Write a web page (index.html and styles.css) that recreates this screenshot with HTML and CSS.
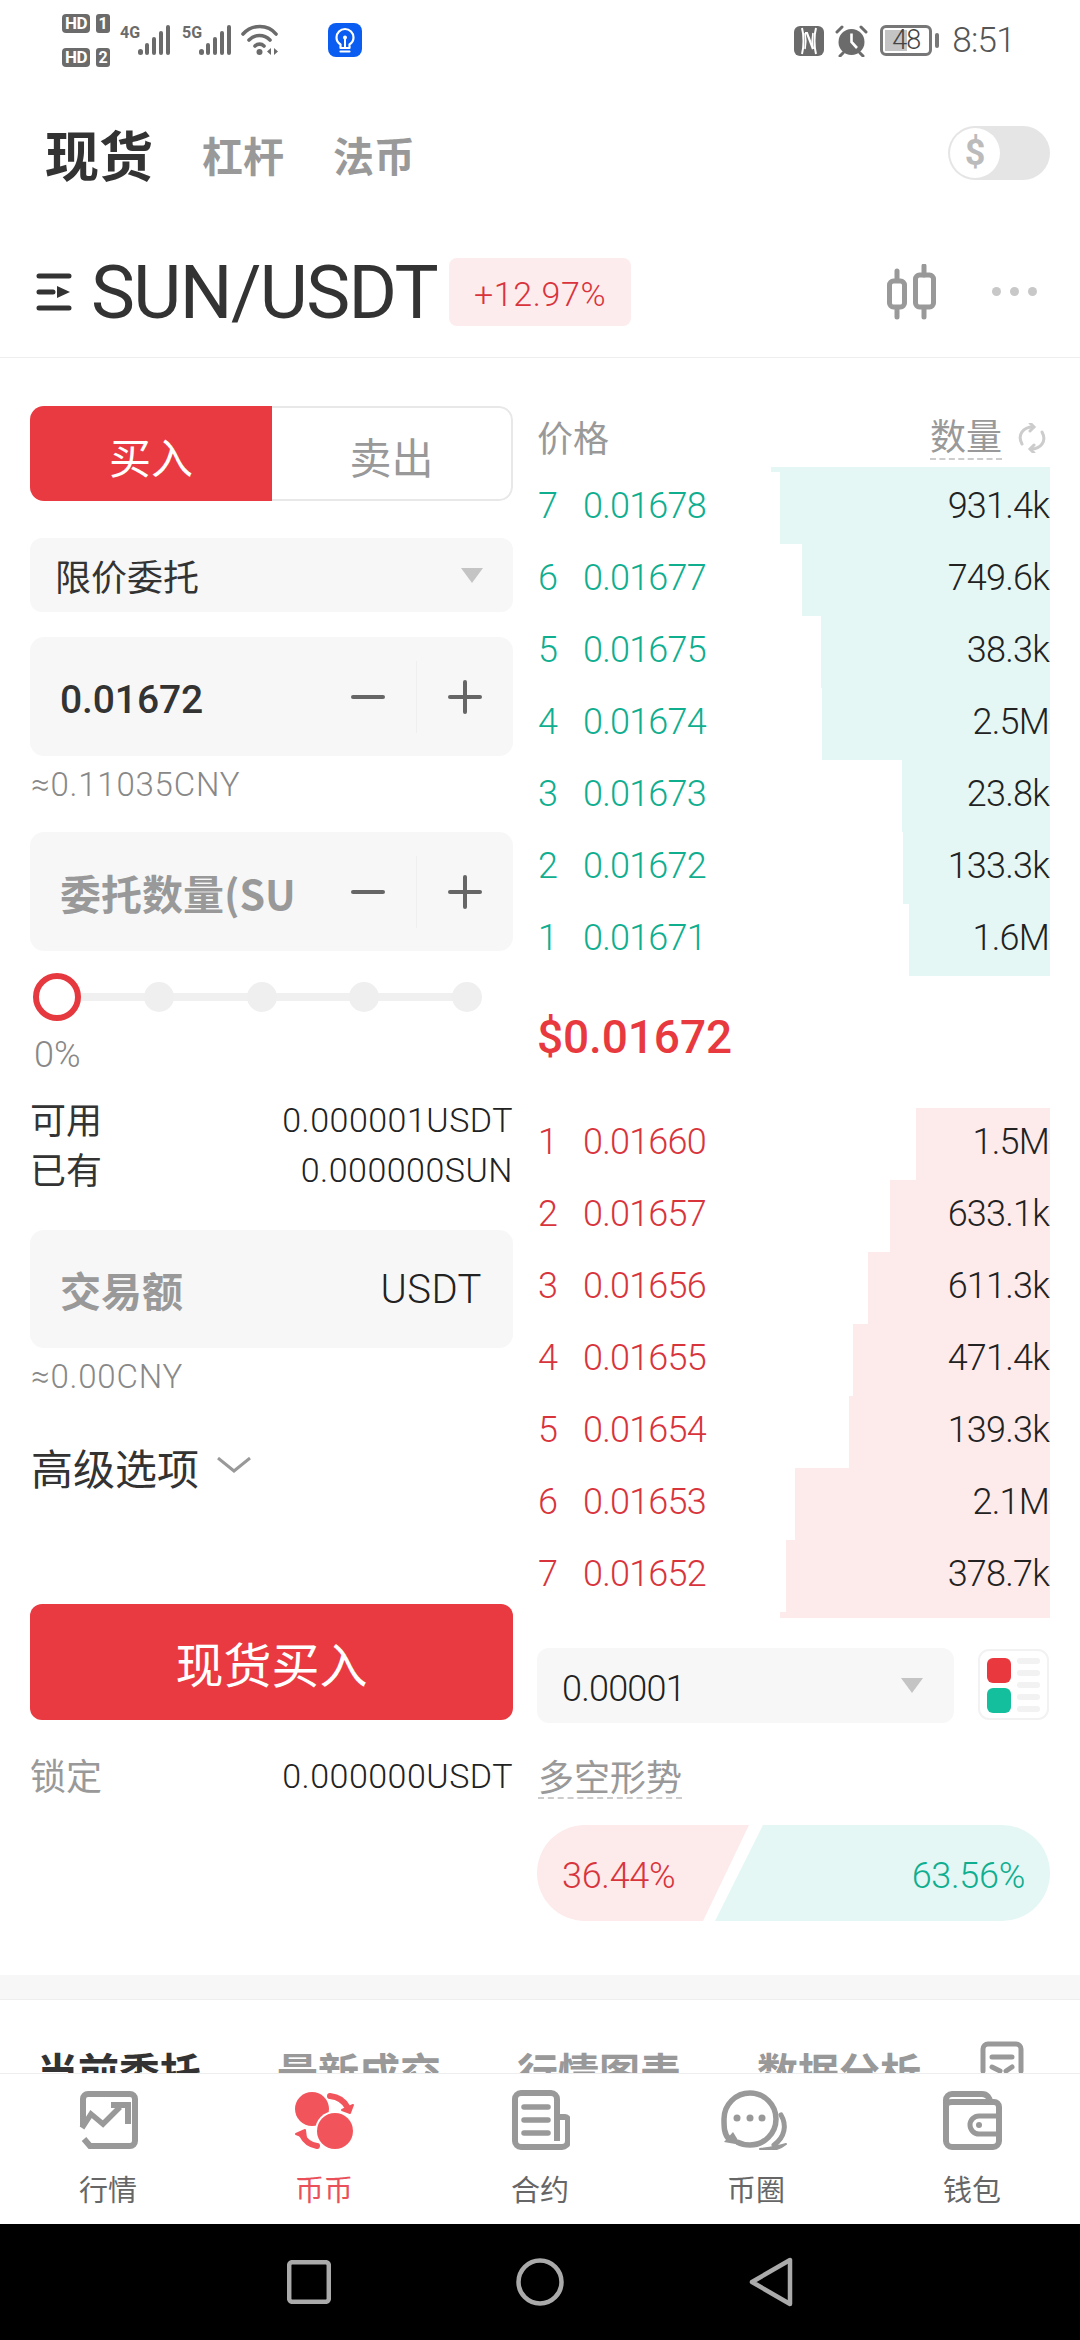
FILE: index.html
```html
<!DOCTYPE html>
<html lang="zh">
<head>
<meta charset="utf-8">
<title>现货</title>
<link rel="stylesheet" href="styles.css">
</head>
<body>
<div class="app">
  <div class="status">
    <div class="hd-stack">
      <div class="hd-line"><span class="hd">HD</span><span class="hd-n">1</span></div>
      <div class="hd-line"><span class="hd">HD</span><span class="hd-n">2</span></div>
    </div>
    <svg class="sig sig-a" width="52" height="32" viewBox="0 0 52 32"><text x="0" y="14" class="sig-t">4G</text><g fill="#6b6b6b"><rect x="18" y="25" width="5" height="6" rx="2.5"/><rect x="25" y="19" width="4" height="12" rx="2"/><rect x="32" y="13" width="4" height="18" rx="2"/><rect x="39" y="7" width="4" height="24" rx="2"/><rect x="46" y="1" width="4" height="30" rx="2"/></g></svg>
    <svg class="sig sig-b" width="50" height="32" viewBox="0 0 50 32"><text x="0" y="14" class="sig-t">5G</text><g fill="#6b6b6b"><rect x="17" y="25" width="5" height="6" rx="2.5"/><rect x="24" y="19" width="4" height="12" rx="2"/><rect x="31" y="13" width="4" height="18" rx="2"/><rect x="38" y="7" width="4" height="24" rx="2"/><rect x="45" y="1" width="4" height="30" rx="2"/></g></svg>
    <svg class="wifi" width="40" height="32" viewBox="0 0 40 32" fill="none" stroke="#6b6b6b" stroke-width="3.6" stroke-linecap="round"><path d="M2 10C11 0 27 0 35 10"/><path d="M8 16C14 10 23 10 29 16"/><path d="M14 22C16.500 19.500 20.500 19.500 23 22"/><circle cx="18.500" cy="28" r="3" fill="#6b6b6b" stroke="none"/><path d="M30 24l-4 3.500 4 3.500zM33 24l4 3.500-4 3.500z" fill="#6b6b6b" stroke="none"/></svg>
    <svg class="bulb" width="34" height="34" viewBox="0 0 34 34"><rect width="34" height="34" rx="8" fill="#0b5df2"/><path d="M12.500 21.500C9.500 19.500 8.500 17 8.500 14.500a8.500 8.500 0 0 1 17 0c0 2.500-1 5-4 7v3.500h-9zM12.500 28.500h9" fill="none" stroke="#fff" stroke-width="2.200" stroke-linecap="round" stroke-linejoin="round"/><path d="M17 25v-9" stroke="#fff" stroke-width="2"/><circle cx="17" cy="14.500" r="2" fill="#fff"/></svg>
    <div class="status-right">
      <svg width="30" height="30" viewBox="0 0 30 30"><rect width="30" height="30" rx="6" fill="#6b6b6b"/><g fill="none" stroke="#fff"><path d="M8 2c2 7 2 19 0 26" stroke-width="2"/><path d="M22 2c-2 7-2 19 0 26" stroke-width="2"/><path d="M11 7h2l6 16" stroke-width="2.200"/><path d="M11 7c1 5 1 11 0 16M19 7c-1 5-1 11 0 16" stroke-width="1.600"/></g></svg>
      <svg class="alarm" width="33" height="32" viewBox="0 0 33 32"><circle cx="16.500" cy="17" r="13" fill="#6b6b6b"/><path d="M16.500 8.500V17l5.500 6" stroke="#fff" stroke-width="2.600" fill="none"/><path d="M2 7l5-5M31 7l-5-5M5 31l3-3M28 31l-3-3" stroke="#6b6b6b" stroke-width="3" stroke-linecap="round"/></svg>
      <div class="battery"><span class="battery-fill"></span><span class="battery-num">48</span></div>
      <span class="battery-nub"></span>
      <span class="clock">8:51</span>
    </div>
  </div>

  <div class="scroll">
    <div class="tabs">
      <span class="tab-on">现货</span>
      <span class="tab">杠杆</span>
      <span class="tab">法币</span>
      <div class="toggle"><span class="knob">$</span></div>
    </div>

    <div class="pair">
      <svg class="menu" width="36" height="38" viewBox="0 0 36 38"><g stroke="#333" stroke-width="5" stroke-linecap="round"><path d="M3 3h30M3 19h14M3 35h30"/></g><path d="M21 13l13 6-13 6z" fill="#333"/></svg>
      <span class="pair-name">SUN/USDT</span>
      <span class="chg">+12.97%</span>
      <svg class="candle" width="50" height="56" viewBox="0 0 50 56" fill="none" stroke="#999" stroke-width="5" stroke-linecap="round"><path d="M10 7v9M10 44v9M37 2v9M37 44v9"/><rect x="2.500" y="17" width="15" height="26" rx="4"/><rect x="28.500" y="11" width="18" height="32" rx="4"/></svg>
      <div class="dots"><i></i><i></i><i></i></div>
    </div>

    <div class="main">
      <div class="trade">
        <div class="seg"><span class="seg-on">买入</span><span class="seg-off">卖出</span></div>
        <div class="select type"><span>限价委托</span><i class="tri"></i></div>
        <div class="field f-price">
          <span class="value">0.01672</span>
          <span class="stepper"><i class="minus"></i><i class="sep"></i><i class="plus"></i></span>
        </div>
        <div class="hint">≈0.11035CNY</div>
        <div class="field f-qty">
          <span class="placeholder">委托数量(SU</span>
          <span class="stepper"><i class="minus"></i><i class="sep"></i><i class="plus"></i></span>
        </div>
        <div class="slider"><i class="ring"></i><i class="stop"></i><i class="stop"></i><i class="stop"></i><i class="stop"></i></div>
        <div class="pct">0%</div>
        <div class="kv kv-first"><span class="k">可用</span><span class="v">0.000001USDT</span></div>
        <div class="kv"><span class="k">已有</span><span class="v">0.000000SUN</span></div>
        <div class="field f-total"><span class="placeholder">交易额</span><span class="unit">USDT</span></div>
        <div class="hint">≈0.00CNY</div>
        <div class="adv"><span>高级选项</span><svg width="34" height="16" viewBox="0 0 34 16" fill="none" stroke="#999" stroke-width="3"><path d="M1 1l16 13L33 1"/></svg></div>
        <div class="buy">现货买入</div>
        <div class="kv lock"><span class="k muted">锁定</span><span class="v">0.000000USDT</span></div>
      </div>

      <div class="book">
        <div class="book-head">
          <span>价格</span>
          <span class="dash qty-h">数量</span>
          <svg class="refresh" width="30" height="30" viewBox="0 0 30 30" fill="none" stroke="#ccc" stroke-width="3" stroke-linecap="round"><path d="M5 21C0 12 6 4 16 4"/><path d="M25 9c5 9-1 17-11 17"/><path d="M13 0l4 4-4 4M17 22l-4 4 4 4"/></svg>
        </div>
        <div class="rows bids">
          <div class="row"><i class="bar" style="width:270px"></i><span class="idx">7</span><span class="px">0.01678</span><span class="qty">931.4k</span></div>
          <div class="row"><i class="bar" style="width:248px"></i><span class="idx">6</span><span class="px">0.01677</span><span class="qty">749.6k</span></div>
          <div class="row"><i class="bar" style="width:229px"></i><span class="idx">5</span><span class="px">0.01675</span><span class="qty">38.3k</span></div>
          <div class="row"><i class="bar" style="width:228px"></i><span class="idx">4</span><span class="px">0.01674</span><span class="qty">2.5M</span></div>
          <div class="row"><i class="bar" style="width:148px"></i><span class="idx">3</span><span class="px">0.01673</span><span class="qty">23.8k</span></div>
          <div class="row"><i class="bar" style="width:147px"></i><span class="idx">2</span><span class="px">0.01672</span><span class="qty">133.3k</span></div>
          <div class="row"><i class="bar" style="width:141px"></i><span class="idx">1</span><span class="px">0.01671</span><span class="qty">1.6M</span></div>
        </div>
        <div class="last">$0.01672</div>
        <div class="rows asks">
          <div class="row"><i class="bar" style="width:134px"></i><span class="idx">1</span><span class="px">0.01660</span><span class="qty">1.5M</span></div>
          <div class="row"><i class="bar" style="width:160px"></i><span class="idx">2</span><span class="px">0.01657</span><span class="qty">633.1k</span></div>
          <div class="row"><i class="bar" style="width:182px"></i><span class="idx">3</span><span class="px">0.01656</span><span class="qty">611.3k</span></div>
          <div class="row"><i class="bar" style="width:197px"></i><span class="idx">4</span><span class="px">0.01655</span><span class="qty">471.4k</span></div>
          <div class="row"><i class="bar" style="width:201px"></i><span class="idx">5</span><span class="px">0.01654</span><span class="qty">139.3k</span></div>
          <div class="row"><i class="bar" style="width:255px"></i><span class="idx">6</span><span class="px">0.01653</span><span class="qty">2.1M</span></div>
          <div class="row"><i class="bar" style="width:264px"></i><span class="idx">7</span><span class="px">0.01652</span><span class="qty">378.7k</span></div>
        </div>
        <div class="depth">
          <div class="select step"><span class="step-v">0.00001</span><i class="tri"></i></div>
          <svg class="layout" width="71" height="71" viewBox="0 0 71 71"><rect x="1" y="1" width="69" height="69" rx="10" fill="#fff" stroke="#f2f2f2" stroke-width="2"/><rect x="9" y="9" width="24" height="25" rx="6" fill="#e9393f"/><rect x="9" y="39" width="24" height="25" rx="6" fill="#14bf9e"/><g fill="#f2f2f2"><rect x="39" y="9" width="23" height="6" rx="3"/><rect x="39" y="21" width="23" height="6" rx="3"/><rect x="39" y="33" width="23" height="6" rx="3"/><rect x="39" y="45" width="23" height="6" rx="3"/><rect x="39" y="57" width="23" height="6" rx="3"/></g></svg>
        </div>
        <div class="ls-title"><span class="dash">多空形势</span></div>
        <div class="ls">
          <div class="ls-red"><span>36.44%</span></div>
          <div class="ls-green"><span>63.56%</span></div>
        </div>
      </div>
    </div>

    <div class="band"></div>

    <div class="lower-tabs">
      <span class="lt-on">当前委托</span>
      <span class="lt">最新成交</span>
      <span class="lt">行情图表</span>
      <span class="lt">数据分析</span>
      <svg class="lt-icon" width="44" height="60" viewBox="0 0 44 60" fill="none" stroke="#999" stroke-width="5" stroke-linecap="round"><path d="M3 30V8a5 5 0 0 1 5-5h28a5 5 0 0 1 5 5v22"/><path d="M12 16h20M12 26l8 4M32 26l-6 4"/></svg>
    </div>
  </div>

  <nav class="nav">
    <div class="nav-item">
      <svg width="60" height="60" viewBox="0 0 60 60" fill="none" stroke="#999" stroke-width="6"><path d="M5 37V9a5 5 0 0 1 5-5h42a5 5 0 0 1 5 5v42a5 5 0 0 1-5 5H12l-6-7"/><path d="M4 38l9-14 12 10 17-17" stroke-width="5.500"/><path d="M33 15h17v19" stroke-width="6"/></svg>
      <span>行情</span>
    </div>
    <div class="nav-item on">
      <svg width="60" height="60" viewBox="0 0 60 60" fill="#f2545b"><circle cx="18" cy="19" r="17"/><circle cx="41" cy="41" r="20" fill="#fff"/><circle cx="41" cy="41" r="18"/><path d="M36 6c9 1 15 6 18 12" fill="none" stroke="#f2545b" stroke-width="6" stroke-linecap="round"/><path d="M48 20l11-5-3 8z" stroke="#f2545b" stroke-width="2" stroke-linejoin="round"/><path d="M8 45c3 6 8 10 15 11" fill="none" stroke="#f2545b" stroke-width="6" stroke-linecap="round"/><path d="M2 44l9-4 1 8z" stroke="#f2545b" stroke-width="2" stroke-linejoin="round"/></svg>
      <span>币币</span>
    </div>
    <div class="nav-item">
      <svg width="60" height="60" viewBox="0 0 60 60" fill="none" stroke="#999" stroke-width="6"><path d="M47 57H11a6 6 0 0 1-6-6V9a6 6 0 0 1 6-6h30a6 6 0 0 1 6 6v42"/><path d="M47 27h8a3 3 0 0 1 3 3v21a6 6 0 0 1-6 6h-5"/><path d="M14 17h24M14 30h24M14 43h24" stroke-width="5.500" stroke-linecap="round"/></svg>
      <span>合约</span>
    </div>
    <div class="nav-item">
      <svg width="70" height="60" viewBox="0 0 70 60"><path d="M8 49C3 44 3 37 3 29a26 26 0 1 1 26 26c-5 0-9-1-13-3" fill="none" stroke="#999" stroke-width="5.500"/><path d="M12 42l-9 10 17 3z" fill="#999"/><circle cx="16" cy="28" r="3.500" fill="#999"/><circle cx="29" cy="28" r="3.500" fill="#999"/><circle cx="41" cy="28" r="3.500" fill="#999"/><path d="M60 25c6 10 4 22-7 30" fill="none" stroke="#999" stroke-width="5" stroke-linecap="round"/><path d="M39 59c8-1 17-2 26-5-6 5-17 8-24 7z" fill="#999" stroke="#999" stroke-width="2" stroke-linejoin="round"/></svg>
      <span>币圈</span>
    </div>
    <div class="nav-item">
      <svg width="60" height="60" viewBox="0 0 60 60" fill="none" stroke="#999" stroke-width="6"><path d="M4 20V10a6 6 0 0 1 6-6h30c5 0 8 4 8 8"/><path d="M4 16c0-3 3-4 6-4h42a5 5 0 0 1 5 5v34a6 6 0 0 1-6 6H10a6 6 0 0 1-6-6z"/><path d="M56 26H37a9 9 0 0 0 0 18h19" stroke-width="5"/><circle cx="37" cy="35" r="3" fill="#999" stroke="none"/></svg>
      <span>钱包</span>
    </div>
  </nav>

  <div class="sysbar">
    <svg width="44" height="44" viewBox="0 0 44 44" fill="none" stroke="#aaa" stroke-width="4.500" stroke-linejoin="round"><rect x="2.200" y="2.200" width="39.600" height="39.600" rx="3"/></svg>
    <svg width="48" height="48" viewBox="0 0 48 48" fill="none" stroke="#aaa" stroke-width="4.500"><circle cx="24" cy="24" r="21.500"/></svg>
    <svg width="44" height="50" viewBox="0 0 44 50" fill="none" stroke="#aaa" stroke-width="4.500" stroke-linejoin="round"><path d="M41 3v44L3 25z"/></svg>
  </div>
</div>
</body>
</html>
```

FILE: styles.css
```css
* { box-sizing: border-box; }
html, body { margin: 0; padding: 0; background: #fff; }
body { font-family: Roboto, "Noto Sans CJK SC", sans-serif; color: #333; }
i { display: block; font-style: normal; }

.app { width: 1080px; height: 2340px; display: flex; flex-direction: column; overflow: hidden; }

/* status bar */
.status { height: 80px; flex: none; display: flex; align-items: center; padding-left: 62px; position: relative; }
.hd-stack { display: flex; flex-direction: column; gap: 15px; margin-top: 1px; }
.hd-line { display: flex; gap: 6px; }
.hd { width: 28px; height: 19px; background: #6b6b6b; color: #fff; border-radius: 4px; font: 700 17px/19px Roboto, sans-serif; letter-spacing: -0.5px; text-align: center; }
.hd-n { width: 14px; height: 19px; background: #6b6b6b; color: #fff; border-radius: 3px; font: 700 16px/19px Roboto, sans-serif; text-align: center; }
.sig-t { font: 700 16px "Liberation Sans Narrow", Roboto, sans-serif; fill: #6b6b6b; }
.sig-a { margin-left: 10px; }
.sig-b { margin-left: 10px; }
.wifi { margin-left: 9px; }
.bulb { margin-left: 47px; }
.status-right { margin-left: auto; display: flex; align-items: center; padding-right: 65px; margin-top: 1px; }
.alarm { margin-left: 11px; }
.battery { position: relative; width: 52px; height: 31px; margin-left: 12px; border: 3px solid #777; border-radius: 6px; overflow: hidden; }
.battery-fill { display: block; width: 22px; height: 21px; margin: 2px; background: #c4c4c4; }
.battery-num { position: absolute; inset: 0; text-align: center; font: 300 27px/25px Roboto, sans-serif; letter-spacing: -1px; color: #444; }
.battery-nub { width: 4px; height: 15px; margin-left: 3px; background: #777; border-radius: 2px; }
.clock { margin-left: 13px; font-size: 35px; font-weight: 300; line-height: 40px; letter-spacing: -0.7px; color: #555; }

.scroll { flex: 1; min-height: 0; overflow: hidden; }

/* market tabs */
.tabs { height: 154px; display: flex; align-items: center; padding: 0 30px 6px 45px; }
.tab-on { font: 700 54px/60px "Noto Sans CJK SC", sans-serif; color: #333; }
.tab { margin-left: 49px; font: 700 41px/60px "Noto Sans CJK SC", sans-serif; color: #999; }
.toggle { margin-left: auto; width: 102px; height: 54px; margin-bottom: 2px; background: #e5e5e5; border-radius: 27px; padding: 2px; }
.knob { display: block; width: 50px; height: 50px; background: #fff; border-radius: 50%; text-align: center; font: 700 36px/50px Roboto, sans-serif; color: #bbb; }

/* pair header */
.pair { height: 124px; display: flex; align-items: center; padding: 0 43px 8px 36px; border-bottom: 1px solid #eee; }
.menu { flex: none; margin-right: 19px; }
.pair-name { padding-top: 3px; font-size: 74px; line-height: 84px; letter-spacing: -1.6px; color: #333; }
.chg { margin-left: 12px; width: 182px; height: 68px; background: #fdeced; border-radius: 8px; text-align: center; font-size: 34px; font-weight: 300; letter-spacing: 0.6px; line-height: 72px; color: #d9343c; }
.candle { margin-left: auto; }
.dots { margin-left: 55px; display: flex; gap: 9px; }
.dots i { width: 9px; height: 9px; border-radius: 50%; background: #c8c8c8; }

/* layout */
.main { display: flex; gap: 24px; padding: 48px 30px 54px; }
.trade { width: 483px; flex: none; }
.book { width: 513px; flex: none; }

/* trade form */
.seg { height: 95px; display: flex; border-radius: 14px; overflow: hidden; font: 400 42px/99px "Noto Sans CJK SC", sans-serif; text-align: center; }
.seg-on { width: 242px; background: #ea3a41; color: #fff; }
.seg-off { flex: 1; border: 2px solid #e8e8e8; border-left: 0; border-radius: 0 14px 14px 0; color: #999; line-height: 95px; }

.select { display: flex; align-items: center; justify-content: space-between; background: #f7f7f7; border-radius: 12px; }
.type { height: 74px; margin-top: 37px; padding: 0 30px 0 25px; font: 400 36px "Noto Sans CJK SC", sans-serif; color: #333; }
.tri { width: 0; height: 0; border-left: 11px solid transparent; border-right: 11px solid transparent; border-top: 15px solid #c4c4c4; }

.field { display: flex; align-items: center; justify-content: space-between; background: #f7f7f7; border-radius: 14px; padding: 0 31px 0 30px; }
.f-price { height: 119px; margin-top: 25px; }
.f-qty { height: 119px; margin-top: 27px; }
.f-total { height: 118px; margin-top: 35px; }
.value { padding-top: 7px; font-size: 39px; font-weight: 500; letter-spacing: -0.1px; color: #333; }
.placeholder { font: 700 41px/60px "Noto Sans CJK SC", sans-serif; color: #999; white-space: nowrap; }
.unit { font-size: 40px; font-weight: 300; letter-spacing: 0.5px; color: #222; }
.stepper { display: flex; align-items: center; width: 131px; }
.minus { width: 34px; height: 4px; background: #666; border-radius: 2px; }
.sep { width: 1px; height: 72px; margin: 0 31px; background: #efefef; }
.plus { position: relative; width: 34px; height: 4px; background: #666; border-radius: 2px; }
.plus::after { content: ""; position: absolute; left: 15px; top: -15px; width: 4px; height: 34px; background: #666; border-radius: 2px; }

.hint { height: 40px; margin-top: 9px; font-size: 33px; font-weight: 300; letter-spacing: 0.8px; line-height: 40px; color: #888; padding-left: 1px; }

.slider { position: relative; display: grid; grid-template-columns: repeat(5, 30px); column-gap: 72.4px; align-items: center; height: 48px; margin-top: 22px; padding-left: 12px; }
.slider::before { content: ""; position: absolute; left: 30px; width: 420px; top: 20px; height: 8px; background: #f0f0f0; }
.ring { position: relative; justify-self: center; width: 48px; height: 48px; border: 6px solid #e5393f; border-radius: 50%; background: #fff; }
.stop { position: relative; width: 30px; height: 30px; border-radius: 50%; background: #efefef; }
.pct { height: 40px; margin-top: 14px; padding-left: 4px; font-size: 36px; font-weight: 300; line-height: 40px; color: #888; }

.kv { display: flex; justify-content: space-between; align-items: center; height: 50px; font: 400 36px/50px "Noto Sans CJK SC", sans-serif; color: #333; }
.kv-first { margin-top: 20px; }
.k { padding-bottom: 5px; }
.kv .v { font: 300 34px/50px Roboto, sans-serif; letter-spacing: 0.5px; color: #222; }
.muted { color: #999; }
.adv { display: flex; align-items: center; gap: 18px; height: 50px; margin-top: 45px; padding-left: 1px; font: 400 42px/50px "Noto Sans CJK SC", sans-serif; color: #333; }
.adv svg { margin-bottom: 4px; }
.buy { height: 116px; margin-top: 112px; background: #ea3a41; border-radius: 12px; color: #fff; text-align: center; font: 400 48px/116px "Noto Sans CJK SC", sans-serif; }
.lock { margin-top: 31px; }

/* order book */
.book-head { display: flex; align-items: center; height: 66px; padding: 0 3px 6px 0; font: 400 36px/44px "Noto Sans CJK SC", sans-serif; color: #999; }
.dash { display: inline-block; border-bottom: 2px dashed #ccc; }
.qty-h { margin-left: auto; line-height: 44px; padding-bottom: 2px; }
.refresh { margin-left: 15px; margin-top: 4px; }

.rows { position: relative; }
.bids::before { content: ""; position: absolute; right: 0; top: -5px; width: 279px; height: 5px; background: #e4f7f5; }
.asks::after { content: ""; position: absolute; right: 0; bottom: -6px; width: 270px; height: 6px; background: #fdeaeb; }
.row { position: relative; display: flex; align-items: center; height: 72px; padding: 0 1px 4px 1px; font-size: 36px; font-weight: 300; letter-spacing: -0.8px; }
.bar { position: absolute; top: 0; right: 0; bottom: 0; }
.bids .bar { background: #e4f7f5; }
.asks .bar { background: #fdeaeb; }
.idx { position: relative; width: 45px; }
.px { position: relative; }
.qty { position: relative; margin-left: auto; color: #222; }
.bids .idx, .bids .px { color: #0fae8f; }
.asks .idx, .asks .px { color: #d8343c; }

.last { height: 132px; padding: 37px 0 0 0; font: 500 46px/48px Roboto, sans-serif; letter-spacing: -0.1px; color: #e8393f; }

.depth { display: flex; align-items: flex-start; justify-content: space-between; margin-top: 36px; }
.step { width: 417px; height: 75px; padding: 0 31px 0 25px; font-size: 36px; font-weight: 300; letter-spacing: -0.8px; color: #222; }
.step-v { padding-top: 6px; }
.layout { margin-top: 1px; margin-right: 1px; }

.ls-title { height: 47px; margin-top: 30px; padding-left: 1px; font: 400 36px/44px "Noto Sans CJK SC", sans-serif; color: #999; }
.ls { display: grid; height: 96px; margin-top: 25px; border-radius: 48px; overflow: hidden; font-size: 36px; font-weight: 300; letter-spacing: -0.3px; }
.ls-red, .ls-green { grid-area: 1 / 1; display: flex; align-items: center; padding: 6px 25px 0; }
.ls-red { background: #fdeaeb; color: #d8343c; clip-path: polygon(0 0, 212px 0, 166px 100%, 0 100%); }
.ls-green { background: #e4f7f5; color: #0fae8f; justify-content: flex-end; clip-path: polygon(226px 0, 100% 0, 100% 100%, 178px 100%); }

/* lower section */
.band { height: 25px; background: #f7f7f7; border-bottom: 1px solid #eee; }
.lower-tabs { display: flex; align-items: flex-start; gap: 76px; padding: 45px 0 0 37px; }
.lt-on, .lt { width: 164px; white-space: nowrap; font: 700 41px/50px "Noto Sans CJK SC", sans-serif; }
.lt-on { color: #333; }
.lt { color: #999; }
.lt-icon { margin: -4px 0 0 -17px; }

/* bottom nav */
.nav { flex: none; height: 151px; display: grid; grid-template-columns: repeat(5, 216px); border-top: 1px solid #eee; background: #fff; padding-top: 16px; }
.nav-item { display: flex; flex-direction: column; align-items: center; font: 400 29px/36px "Noto Sans CJK SC", sans-serif; color: #666; }
.nav-item span { margin-top: 20px; }
.nav-item.on { color: #e9505a; }

.sysbar { flex: none; height: 116px; background: #000; display: flex; align-items: center; padding: 0 0 0 287px; }
.sysbar svg:nth-child(2) { margin-left: 185px; }
.sysbar svg:nth-child(3) { margin-left: 185px; }
```
